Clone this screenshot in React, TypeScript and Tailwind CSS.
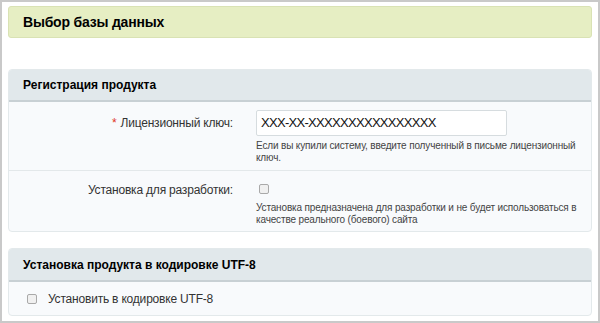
export default function App() {
  return (
    <div
      className="w-[600px] h-[323px] bg-white border-2 border-[#c9c9c9] overflow-hidden px-[6px] pt-[4px] text-[#000]"
      style={{ fontFamily: '"Liberation Sans", Arial, sans-serif' }}
    >
      <div className="h-[32px] bg-[#e6eec3] border border-[#d9e2b4] rounded-[3px] flex items-center pl-[14px]">
        <h1 className="text-[14px] tracking-[-0.2px] font-bold">Выбор базы данных</h1>
      </div>

      <div className="mt-[31px] border border-[#e3e9eb] rounded-[4px] bg-[#f8fafc] overflow-hidden">
        <div className="h-[32px] bg-[#e1e8eb] border-b-2 border-[#c8d0d4] flex items-center pl-[14px]">
          <h2 className="text-[12px] font-bold">Регистрация продукта</h2>
        </div>

        <div className="flex border-b border-[#e3e8ea] pt-[8px] pb-[6px]">
          <div className="w-[224px] text-right text-[12px] tracking-[-0.2px] text-[#333] pt-[4px]">
            <span className="text-[#e0351f] mr-[4px]">*</span>Лицензионный ключ:
          </div>
          <div className="ml-[23px] w-[322px]">
            <div className="w-[251px] h-[26px] bg-white border border-[#d6dcdf] rounded-[2px] flex items-center pl-[4px] text-[13px] tracking-[-0.7px] text-[#111]">
              XXX-XX-XXXXXXXXXXXXXXXX
            </div>
            <p className="mt-[4px] text-[10px] leading-[12px] tracking-[-0.15px] text-[#444]">
              Если вы купили систему, введите полученный в письме лицензионный ключ.
            </p>
          </div>
        </div>

        <div className="flex pt-[10px] pb-[5px]">
          <div className="w-[224px] text-right text-[12px] tracking-[-0.2px] text-[#333]">Установка для разработки:</div>
          <div className="ml-[23px] w-[322px]">
            <div className="h-[16px] flex items-center pl-[3px]">
              <span className="block w-[10px] h-[10px] border border-[#a9a9a9] rounded-[2px] bg-[#f0f0f0]" />
            </div>
            <p className="mt-[5px] text-[10px] leading-[12px] tracking-[-0.15px] text-[#444]">
              Установка предназначена для разработки и не будет использоваться в качестве реального (боевого) сайта
            </p>
          </div>
        </div>
      </div>

      <div className="mt-[16px] border border-[#e3e9eb] rounded-[4px] bg-[#f8fafc] overflow-hidden">
        <div className="h-[33px] bg-[#e1e8eb] border-b-2 border-[#c8d0d4] flex items-center pl-[14px]">
          <h2 className="text-[12px] font-bold">Установка продукта в кодировке UTF-8</h2>
        </div>
        <div className="h-[33px] flex items-center pl-[18px] text-[12px] tracking-[-0.2px] text-[#333]">
          <span className="block w-[10px] h-[10px] border border-[#a9a9a9] rounded-[2px] bg-[#f0f0f0] mr-[11px]" />
          Установить в кодировке UTF-8
        </div>
      </div>
    </div>
  );
}
